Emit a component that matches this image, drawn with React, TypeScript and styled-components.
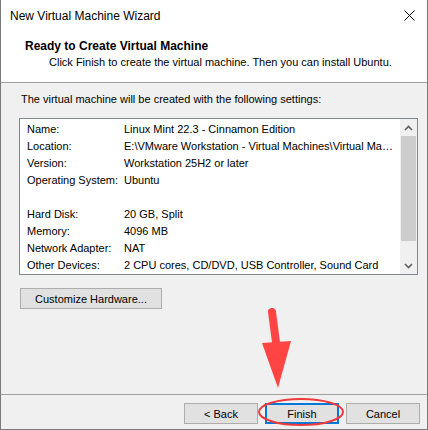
import styled, { createGlobalStyle } from "styled-components";

const GlobalStyle = createGlobalStyle`
  html, body {
    margin: 0;
    padding: 0;
    background: #f0f0f0;
  }
  body {
    font-family: "Liberation Sans", Arial, sans-serif;
    font-size: 11px;
    color: #000;
  }
`;

const Window = styled.div`
  position: relative;
  width: 428px;
  height: 430px;
  box-sizing: border-box;
  border: 1px solid #7a7a7a;
  border-top: none;
  background: #f0f0f0;
  display: flex;
  flex-direction: column;
  overflow: hidden;
`;

const TitleBar = styled.div`
  height: 31px;
  flex: none;
  background: #fff;
  display: flex;
  align-items: center;
  justify-content: space-between;
  padding: 0 8px 1px 9px;
  font-size: 12px;
`;

const CloseButton = styled.span`
  display: flex;
  align-items: center;
  justify-content: center;
  width: 20px;
  height: 20px;
`;

const Header = styled.div`
  flex: none;
  height: 51px;
  box-sizing: border-box;
  background: #fff;
  border-bottom: 1px solid #a0a0a0;
  padding: 6px 0 0 24px;
  line-height: 16px;
`;

const HeaderTitle = styled.div`
  font-weight: bold;
  font-size: 12px;
`;

const HeaderSub = styled.div`
  padding-left: 24px;
`;

const Body = styled.div`
  flex: 1;
  padding: 8px 10px 0 18px;
  display: flex;
  flex-direction: column;
  align-items: flex-start;
`;

const Intro = styled.div`
  line-height: 16px;
  padding-left: 2px;
`;

const ListBox = styled.div`
  margin-top: 11px;
  width: 399px;
  height: 157px;
  box-sizing: border-box;
  border: 1px solid #828790;
  background: #fff;
  display: flex;
`;

const Rows = styled.div`
  flex: 1;
  padding: 1px 0 0 7px;
`;

const Row = styled.div`
  height: 17px;
  display: grid;
  grid-template-columns: 97px 1fr;
  align-items: center;
  white-space: nowrap;
`;

const ScrollBar = styled.div`
  width: 17px;
  background: #f0f0f0;
  display: flex;
  flex-direction: column;
`;

const ScrollArrow = styled.div`
  height: 17px;
  flex: none;
  display: flex;
  align-items: center;
  justify-content: center;
`;

const ScrollThumb = styled.div`
  height: 105px;
  margin: 0 1px;
  background: #cdcdcd;
`;

const ScrollTrack = styled.div`
  flex: 1;
`;

const Button = styled.button<{ $primary?: boolean; $width?: number }>`
  width: ${(p) => p.$width ?? 74}px;
  height: 21px;
  box-sizing: border-box;
  padding: 0;
  font-family: inherit;
  font-size: 11px;
  color: #000;
  background: #e1e1e1;
  border: ${(p) => (p.$primary ? "2px solid #0078d7" : "1px solid #adadad")};
  border-radius: 0;
`;

const CustomizeButton = styled(Button)`
  margin: 13px 0 0 1px;
`;

const Footer = styled.div`
  flex: none;
  height: 35px;
  box-sizing: border-box;
  border-top: 1px solid #a0a0a0;
  padding: 8px 7px 0 0;
  display: flex;
  justify-content: flex-end;
  gap: 7px;
`;

const Annotation = styled.svg`
  position: absolute;
  left: 0;
  top: 0;
  pointer-events: none;
`;

const rows: [string, string][] = [
  ["Name:", "Linux Mint 22.3 - Cinnamon Edition"],
  ["Location:", "E:\\VMware Workstation - Virtual Machines\\Virtual Ma…"],
  ["Version:", "Workstation 25H2 or later"],
  ["Operating System:", "Ubuntu"],
  ["", ""],
  ["Hard Disk:", "20 GB, Split"],
  ["Memory:", "4096 MB"],
  ["Network Adapter:", "NAT"],
  ["Other Devices:", "2 CPU cores, CD/DVD, USB Controller, Sound Card"],
];

const Chevron = ({ up }: { up?: boolean }) => (
  <svg width="9" height="6" viewBox="0 0 9 6">
    <path
      d={up ? "M1 5 L4.5 1.5 L8 5" : "M1 1 L4.5 4.5 L8 1"}
      fill="none"
      stroke="#606060"
      strokeWidth="1.6"
    />
  </svg>
);

const App = () => {
  return (
    <>
      <GlobalStyle />
      <Window>
        <TitleBar>
          <span>New Virtual Machine Wizard</span>
          <CloseButton>
            <svg width="11" height="11" viewBox="0 0 11 11">
              <path d="M0.5 0.5 L10.5 10.5 M10.5 0.5 L0.5 10.5" stroke="#000" strokeWidth="1" />
            </svg>
          </CloseButton>
        </TitleBar>
        <Header>
          <HeaderTitle>Ready to Create Virtual Machine</HeaderTitle>
          <HeaderSub>
            Click Finish to create the virtual machine. Then you can install Ubuntu.
          </HeaderSub>
        </Header>
        <Body>
          <Intro>The virtual machine will be created with the following settings:</Intro>
          <ListBox>
            <Rows>
              {rows.map(([label, value], i) => (
                <Row key={i}>
                  <span>{label}</span>
                  <span>{value}</span>
                </Row>
              ))}
            </Rows>
            <ScrollBar>
              <ScrollArrow>
                <Chevron up />
              </ScrollArrow>
              <ScrollThumb />
              <ScrollTrack />
              <ScrollArrow>
                <Chevron />
              </ScrollArrow>
            </ScrollBar>
          </ListBox>
          <CustomizeButton $width={142}>Customize Hardware...</CustomizeButton>
        </Body>
        <Footer>
          <Button>&lt; Back</Button>
          <Button $primary>Finish</Button>
          <Button>Cancel</Button>
        </Footer>
        <Annotation width="428" height="430" viewBox="0 0 428 430">
          <path d="M271 312 L275.5 346" stroke="#f44" strokeWidth="8" strokeLinecap="round" />
          <path d="M261 343 L290 341 L277 388 Z" fill="#f44" />
          <ellipse cx="300" cy="412" rx="42" ry="13" fill="none" stroke="#ee3a3a" strokeWidth="2" />
        </Annotation>
      </Window>
    </>
  );
};

export default App;
